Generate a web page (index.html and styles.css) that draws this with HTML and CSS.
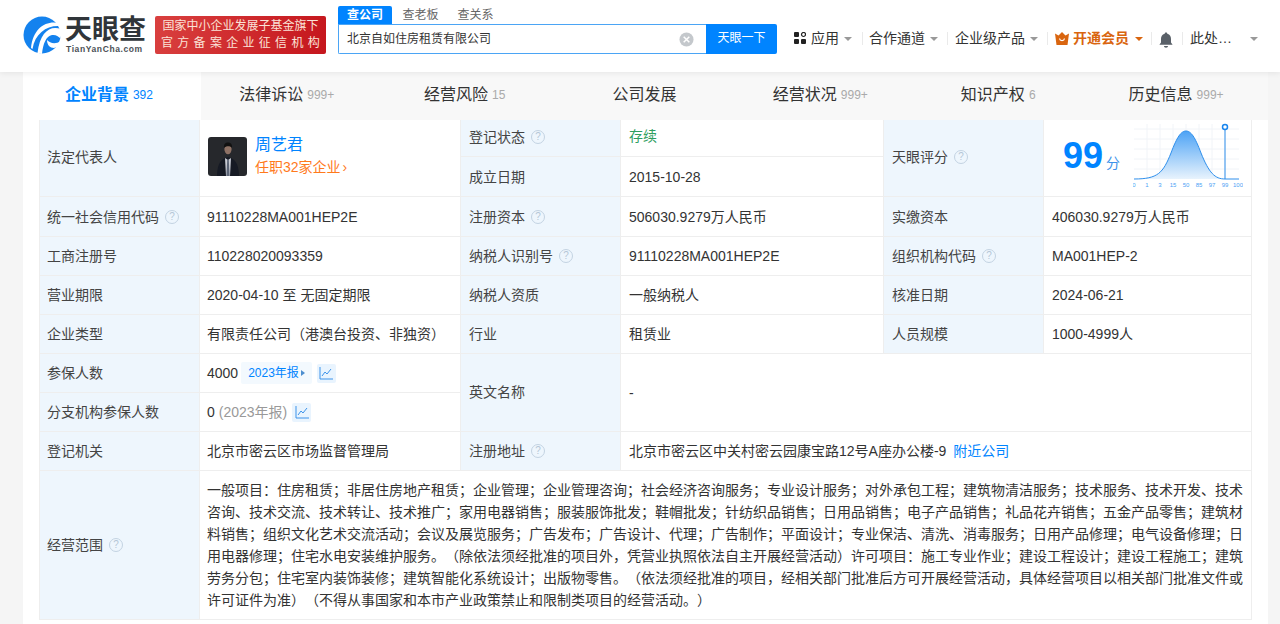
FILE: index.html
```html
<!DOCTYPE html>
<html lang="zh-CN">
<head>
<meta charset="utf-8">
<title>北京自如住房租赁有限公司</title>
<link rel="stylesheet" href="styles.css">
</head>
<body>
<header class="top">
  <div class="logo">
    <svg class="logo-mark" viewBox="0 0 38 38" width="38" height="38">
      <circle cx="19" cy="19" r="18.5" fill="#1482ee"/>
      <path d="M38 6L30 0L38 0Z" fill="#fff"/>
      <path d="M36 7C23 4 10 12 8 32L9.500 33C12 17 24 9 37 10Z" fill="#fff"/>
      <path d="M38 13C27 9 17 16 14.500 37L19 38C20 28 23 20 29 19C33 18.500 35 20 37 22L38 20Z" fill="#fff"/>
      <path d="M37.500 25C33 28.500 27 27.500 24 24C24 29 27 32 31 32L36 30L38 27Z" fill="#fff"/>
    </svg>
    <div class="logo-text">
      <div class="logo-cn">天眼查</div>
      <div class="logo-en">TianYanCha.com</div>
    </div>
  </div>
  <div class="badge">
    <div class="badge-a">国家中小企业发展子基金旗下</div>
    <div class="badge-b">官方备案企业征信机构</div>
  </div>
  <div class="search">
    <div class="search-tabs">
      <span class="stab stab-on">查公司</span>
      <span class="stab">查老板</span>
      <span class="stab">查关系</span>
    </div>
    <div class="search-row">
      <div class="search-input">
        <span>北京自如住房租赁有限公司</span>
        <svg viewBox="0 0 16 16" width="15" height="15"><circle cx="8" cy="8" r="7.5" fill="#c4c8cc"/><path d="M5 5l6 6M11 5l-6 6" stroke="#fff" stroke-width="1.6"/></svg>
      </div>
      <div class="search-btn">天眼一下</div>
    </div>
  </div>
  <nav class="nav">
    <div class="nav-item nav-first">
      <svg viewBox="0 0 12 12" width="12" height="12"><rect width="5" height="5" rx="1" fill="#222"/><rect y="7" width="5" height="5" rx="1" fill="#222"/><rect x="7" y="7" width="5" height="5" rx="1" fill="#222"/><circle cx="9.5" cy="2.5" r="2" fill="none" stroke="#222" stroke-width="1.2"/></svg>
      <span>应用</span><i class="caret"></i>
    </div>
    <div class="nav-item"><span>合作通道</span><i class="caret"></i></div>
    <div class="nav-item"><span>企业级产品</span><i class="caret"></i></div>
    <div class="nav-item nav-vip">
      <svg viewBox="0 0 14 13" width="14" height="13"><path d="M0 1.5l3.5 2L7 0l3.5 3.5 3.5-2L12.5 13h-11Z" fill="#d9650f"/><path d="M4.5 6.5c.5 2.8 4.5 2.8 5 0" fill="none" stroke="#fff" stroke-width="1.3"/></svg>
      <span>开通会员</span><i class="caret"></i>
    </div>
    <div class="nav-item nav-bell">
      <svg viewBox="0 0 14 16" width="14" height="16"><path d="M7 0.5c.8 0 1.3.5 1.3 1.2C11 2.4 12 4.6 12 7v3.5l1.6 2.3H.4L2 10.500V7c0-2.400 1-4.600 3.700-5.300C5.700 1 6.200.5 7 .5Z" fill="#596068"/><path d="M5 14h4c0 1-.9 1.700-2 1.700S5 15 5 14Z" fill="#596068"/></svg>
    </div>
    <div class="nav-item nav-user"><span>此处…</span><i class="caret"></i></div>
  </nav>
</header>

<main class="card">
  <div class="tabs">
    <div class="tab tab-on"><b>企业背景</b><small>392</small></div>
    <div class="tab"><b>法律诉讼</b><small>999+</small></div>
    <div class="tab"><b>经营风险</b><small>15</small></div>
    <div class="tab"><b>公司发展</b></div>
    <div class="tab"><b>经营状况</b><small>999+</small></div>
    <div class="tab"><b>知识产权</b><small>6</small></div>
    <div class="tab"><b>历史信息</b><small>999+</small></div>
  </div>
  <div class="grid">
    <div class="cell lead label span-r2 raise">法定代表人</div>
    <div class="cell lead span-r2 person">
      <svg class="avatar" viewBox="0 0 39 39" width="39" height="39">
        <rect width="39" height="39" rx="3" fill="#26282c"/>
        <path d="M9 39c0-10 3-16 8-18l3-1 3 1c5 2 8 8 8 18Z" fill="#161a24"/>
        <path d="M17 21l3 2 3-2 -1 18h-4Z" fill="#c9ccd4"/>
        <path d="M19.200 23h1.600l.8 16h-3.200Z" fill="#5d6678"/>
        <ellipse cx="20" cy="12" rx="3.600" ry="5.200" fill="#8f7265"/>
        <path d="M16 11c-.5-4 1.500-5.500 4-5.500s4.500 1.500 4 5.500c-1-2-6-2.500-8 0Z" fill="#111"/>
      </svg>
      <div class="person-text">
        <div class="person-name">周艺君</div>
        <div class="person-job">任职32家企业<span class="chev">›</span></div>
      </div>
    </div>
    <div class="cell label raise">登记状态<i class="q"></i></div>
    <div class="cell status">存续</div>
    <div class="cell label span-r2 raise-sm">天眼评分<i class="q"></i></div>
    <div class="cell span-r2 score">
      <div class="score-num"><b>99</b><span>分</span></div>
      <svg class="score-chart" viewBox="0 0 110 66" width="110" height="66">
        <defs><linearGradient id="g" x1="0" y1="0" x2="0" y2="1"><stop offset="0" stop-color="#4da3f5"/><stop offset="1" stop-color="#e8f3fd"/></linearGradient></defs>
        <path d="M1 6H106M1 16H106M1 26H106M1 36H106M1 46H106M14 1V56M27 1V56M40 1V56M53 1V56M66 1V56M79 1V56M92 1V56" stroke="#f1f4f8" stroke-width="1" fill="none"/>
        <path d="M1 56C25 56 30 50 38 30C44 14 48 8 53 8C58 8 62 14 68 30C76 50 82 56 92 56Z" fill="url(#g)"/>
        <path d="M1 56C25 56 30 50 38 30C44 14 48 8 53 8C58 8 62 14 68 30C76 50 82 56 92 56H106" fill="none" stroke="#2e8fec" stroke-width="1"/>
        <path d="M92 6V56" stroke="#2e8fec" stroke-width="1"/>
        <circle cx="92" cy="4" r="2.500" fill="#fff" stroke="#1a86ee" stroke-width="1.500"/>
        <g class="ticks">
          <text x="1" y="64">0</text><text x="14" y="64">1</text><text x="27" y="64">3</text><text x="40" y="64">15</text><text x="53" y="64">50</text><text x="66" y="64">85</text><text x="79" y="64">97</text><text x="92" y="64">99</text><text x="105" y="64">100</text>
        </g>
      </svg>
    </div>

    <div class="cell label">成立日期</div>
    <div class="cell">2015-10-28</div>

    <div class="cell lead label">统一社会信用代码<i class="q"></i></div>
    <div class="cell lead">91110228MA001HEP2E</div>
    <div class="cell label">注册资本<i class="q"></i></div>
    <div class="cell">506030.9279万人民币</div>
    <div class="cell label">实缴资本</div>
    <div class="cell">406030.9279万人民币</div>

    <div class="cell lead label">工商注册号</div>
    <div class="cell lead">110228020093359</div>
    <div class="cell label">纳税人识别号<i class="q"></i></div>
    <div class="cell">91110228MA001HEP2E</div>
    <div class="cell label">组织机构代码<i class="q"></i></div>
    <div class="cell">MA001HEP-2</div>

    <div class="cell lead label">营业期限</div>
    <div class="cell lead">2020-04-10 至 无固定期限</div>
    <div class="cell label">纳税人资质</div>
    <div class="cell">一般纳税人</div>
    <div class="cell label">核准日期</div>
    <div class="cell">2024-06-21</div>

    <div class="cell lead label">企业类型</div>
    <div class="cell lead">有限责任公司（港澳台投资、非独资）</div>
    <div class="cell label">行业</div>
    <div class="cell">租赁业</div>
    <div class="cell label">人员规模</div>
    <div class="cell">1000-4999人</div>

    <div class="cell lead label">参保人数</div>
    <div class="cell lead">4000<span class="tag">2023年报<i class="tri"></i></span>
      <span class="trend"><svg viewBox="0 0 14 14" width="14" height="14"><path d="M1 1V13H14" fill="none" stroke="#3d93ea" stroke-width="1"/><path d="M3 10l3-4 2 2 4-5" fill="none" stroke="#3d93ea" stroke-width="1"/></svg></span>
    </div>
    <div class="cell label span-r2 raise-sm">英文名称</div>
    <div class="cell span-r2 span-c3">-</div>

    <div class="cell lead label">分支机构参保人数</div>
    <div class="cell lead">0<span class="muted">(2023年报)</span>
      <span class="trend trend-b"><svg viewBox="0 0 14 14" width="14" height="14"><path d="M1 1V13H14" fill="none" stroke="#3d93ea" stroke-width="1"/><path d="M3 10l3-4 2 2 4-5" fill="none" stroke="#3d93ea" stroke-width="1"/></svg></span>
    </div>

    <div class="cell lead label">登记机关</div>
    <div class="cell lead">北京市密云区市场监督管理局</div>
    <div class="cell label">注册地址<i class="q"></i></div>
    <div class="cell span-c3">北京市密云区中关村密云园康宝路12号A座办公楼-9<a class="near">附近公司</a></div>

    <div class="cell lead label">经营范围<i class="q"></i></div>
    <div class="cell lead span-c5 scope">一般项目：住房租赁；非居住房地产租赁；企业管理；企业管理咨询；社会经济咨询服务；专业设计服务；对外承包工程；建筑物清洁服务；技术服务、技术开发、技术咨询、技术交流、技术转让、技术推广；家用电器销售；服装服饰批发；鞋帽批发；针纺织品销售；日用品销售；电子产品销售；礼品花卉销售；五金产品零售；建筑材料销售；组织文化艺术交流活动；会议及展览服务；广告发布；广告设计、代理；广告制作；平面设计；专业保洁、清洗、消毒服务；日用产品修理；电气设备修理；日用电器修理；住宅水电安装维护服务。（除依法须经批准的项目外，凭营业执照依法自主开展经营活动）许可项目：施工专业作业；建设工程设计；建设工程施工；建筑劳务分包；住宅室内装饰装修；建筑智能化系统设计；出版物零售。（依法须经批准的项目，经相关部门批准后方可开展经营活动，具体经营项目以相关部门批准文件或许可证件为准）（不得从事国家和本市产业政策禁止和限制类项目的经营活动。）</div>
  </div>
</main>
</body>
</html>
```
FILE: styles.css
```css
* { box-sizing: border-box; }
html, body { margin: 0; height: 624px; overflow: hidden; }
body {
  background: #f5f5f5;
  color: #333;
  font-family: "Liberation Sans", "Noto Sans CJK SC", sans-serif;
  font-size: 14px;
  line-height: 20px;
  text-spacing-trim: space-all;
}
.top {
  position: relative;
  z-index: 2;
  height: 72px;
  background: #fff;
  box-shadow: 0 1px 6px rgba(0, 0, 0, .08);
  display: flex;
  align-items: flex-start;
  padding-left: 23px;
}
.logo { display: flex; margin-top: 16px; width: 123px; gap: 4px; }
.logo-mark { flex: none; margin-top: 0; }
.logo-text { color: #2b3035; }
.logo-cn { font-size: 27px; line-height: 28px; font-weight: 700; white-space: nowrap; color: #30353a; }
.logo-en { font-size: 8.5px; line-height: 10px; font-weight: 700; letter-spacing: .6px; margin-left: 1px; color: #4b5056; white-space: nowrap; }
.badge {
  margin: 16px 0 0 9px;
  width: 171px;
  height: 38px;
  border-radius: 2px;
  background: linear-gradient(100deg, #d9403f, #c5161d);
  color: #fbe3d8;
  text-align: center;
  white-space: nowrap;
  font-size: 12px;
  line-height: 17px;
  padding-top: 2px;
}
.badge-b { letter-spacing: 4.3px; margin-right: -4px; }
.search { margin: 6px 0 0 12px; width: 439px; }
.search-tabs { display: flex; height: 18px; }
.stab { width: 55px; text-align: center; font-size: 12px; line-height: 18px; color: #666; }
.stab-on {
  width: 54px;
  margin-right: 1px;
  background: #0084ff;
  color: #fff;
  font-weight: 700;
  border-radius: 2px 2px 0 0;
}
.search-row { display: flex; height: 30px; }
.search-input {
  width: 368px;
  border: 1px solid #4ba5f5;
  border-right: 0;
  border-radius: 0 0 0 2px;
  display: flex;
  align-items: center;
  justify-content: space-between;
  padding: 0 12px 0 8px;
  font-size: 12px;
  color: #333;
}
.search-btn {
  width: 71px;
  background: #0084ff;
  color: #fff;
  font-size: 12px;
  line-height: 29px;
  text-align: center;
  border-radius: 0 2px 2px 0;
}
.nav { display: flex; margin: 27px 0 0 17px; height: 22px; align-items: center; }
.nav-item {
  display: flex;
  align-items: center;
  height: 22px;
  padding: 0 0 0 7px;
  position: relative;
  white-space: nowrap;
  color: #333;
  font-size: 14px;
}
.nav-item::before {
  content: "";
  position: absolute;
  left: 0;
  top: 5px;
  height: 13px;
  border-left: 1px solid #eaeaea;
}
.nav-first { width: 68px; padding-left: 0; }
.nav-first::before { display: none; }
.nav-first svg { margin-right: 5px; }
.nav-item:nth-child(2) { width: 85px; }
.nav-item:nth-child(3) { width: 100px; padding-left: 8px; }
.nav-vip { width: 104px; padding-left: 8px; color: #d9650f; font-weight: 700; }
.nav-vip svg { margin-right: 4px; }
.nav-bell { width: 31px; padding-left: 8px; }
.nav-bell svg { margin-top: 3px; }
.nav-user { width: 80px; padding-left: 8px; }
.caret {
  display: inline-block;
  margin-left: 5px;
  width: 0;
  height: 0;
  margin-top: 1px;
  border: 4px solid transparent;
  border-top: 4px solid #999;
  border-bottom: 0;
}
.nav-vip .caret { border-top-color: #d9650f; margin-left: 6px; }
.nav-user .caret { margin-left: 18px; }
.card { margin-left: 23px; width: 1245px; height: 552px; background: #fff; overflow: hidden; }
.tabs { display: grid; grid-template-columns: repeat(7, 1fr); height: 48px; background: #f8f8f8; }
.tab { display: flex; align-items: center; justify-content: center; white-space: nowrap; padding: 0 2px 3px 0; }
.tab b { font-weight: 400; font-size: 16px; color: #333; }
.tab small { font-size: 12px; margin: 0 4px 0 4px; color: #aaa; }
.tab-on { background: #fff; }
.tab-on b { color: #0084ff; font-weight: 700; }
.tab-on small { color: #0084ff; }
.grid {
  margin-left: 16px;
  width: 1213px;
  display: grid;
  grid-template-columns: 160px 261px 160px 263px 160px 208px;
  grid-template-rows: 37px 40px 40px repeat(6, 39px) 149px;
  border-left: 1px solid #eee;
}
.cell {
  display: flex;
  align-items: center;
  padding: 0 8px;
  border-right: 1px solid #eee;
  border-bottom: 1px solid #eee;
  white-space: nowrap;
  min-width: 0;
  color: #333;
}
.cell.lead { padding-left: 7px; }
.label { background: #eef6fd; color: #444; }
.raise { padding-bottom: 3px; }
.raise-sm { padding-bottom: 2px; }
.span-r2 { grid-row: span 2; }
.span-c3 { grid-column: span 3; }
.span-c5 { grid-column: span 5; }
.q {
  display: inline-block;
  width: 14px;
  height: 14px;
  margin-left: 6px;
  border: 1px solid #c3d3e2;
  border-radius: 50%;
  position: relative;
}
.q::after {
  content: "?";
  position: absolute;
  left: 0;
  right: 0;
  top: 0;
  text-align: center;
  font: 10px/12px "Liberation Sans", sans-serif;
  color: #b5c6d6;
}
.person { gap: 8px; padding-bottom: 4px; }
.avatar { flex: none; margin-left: 1px; }
.person-name { font-size: 16px; line-height: 22px; color: #0084ff; }
.person-job { font-size: 14px; line-height: 22px; color: #ff7a1c; }
.chev { margin-left: 2px; }
.status { color: #2f9e5f; padding-bottom: 4px; }
.score { padding: 0 0 0 19px; align-items: flex-start; }
.score-num { width: 70px; margin-top: 13px; white-space: nowrap; color: #0084ff; }
.score-num b { font-size: 36px; line-height: 46px; }
.score-num span { font-size: 14px; margin-left: 3px; color: #3d93ea; }
.score-chart { margin-top: 3px; flex: none; }
.ticks text { font: 6px "Liberation Sans", sans-serif; fill: #4da3f5; text-anchor: middle; }
.tag {
  margin-left: 3px;
  padding: 0 7px;
  height: 22px;
  line-height: 22px;
  font-size: 12px;
  color: #0084ff;
  background: #f3f9fe;
  border-radius: 2px;
  display: inline-flex;
  align-items: center;
}
.tri {
  margin-left: 2px;
  border: 3px solid transparent;
  border-left: 4px solid #4d8fd0;
  border-right: 0;
}
.trend {
  margin-left: 5px;
  width: 19px;
  height: 19px;
  display: inline-flex;
  align-items: center;
  justify-content: center;
  background: #e9f4fe;
  border-radius: 2px;
}
.muted { color: #999; margin-left: 4px; }
.near { margin-left: 7px; color: #0084ff; }
.scope { white-space: normal; line-height: 22px; padding: 8px 5px 8px 7px; align-items: flex-start; }
```
